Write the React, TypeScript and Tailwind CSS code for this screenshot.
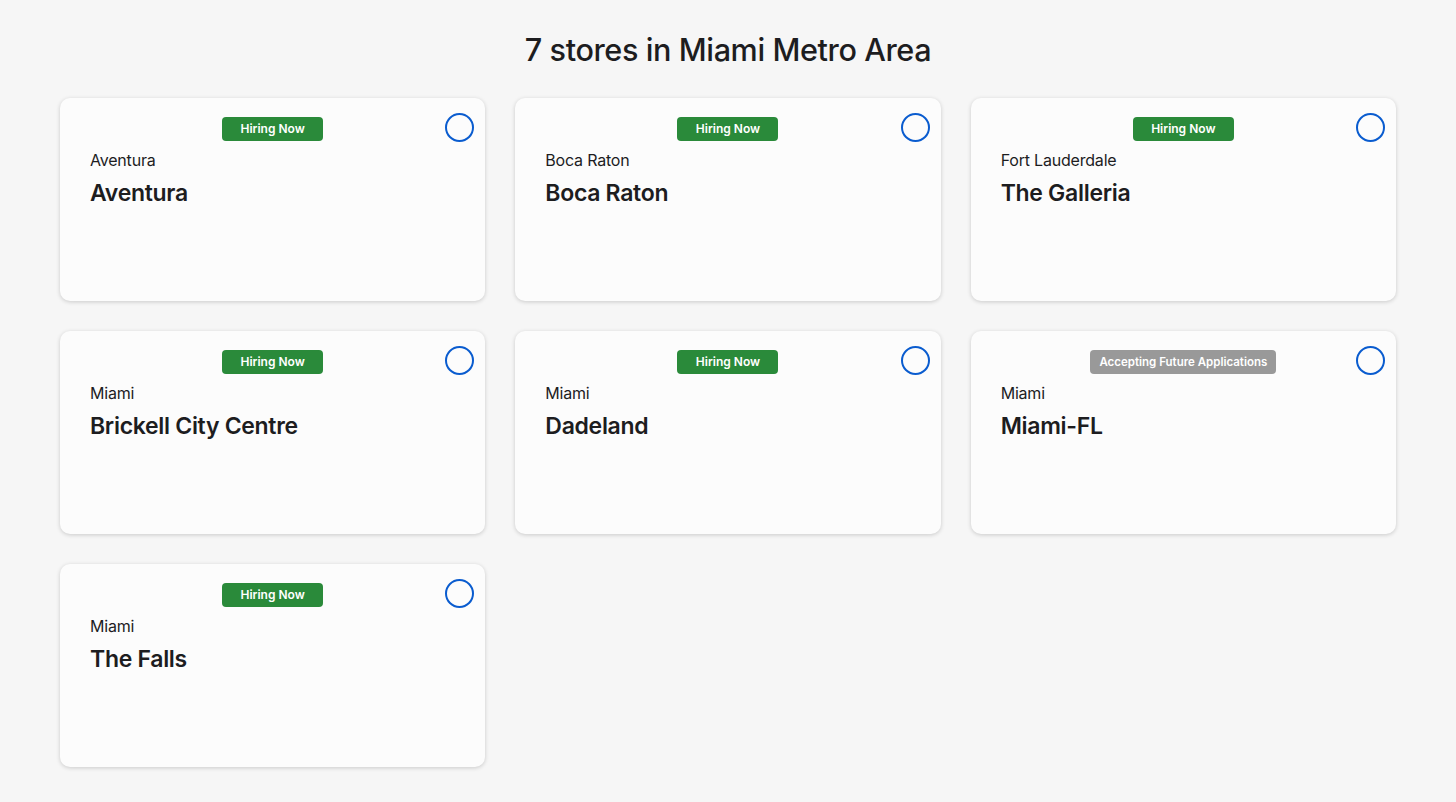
import * as React from 'react';

interface Store {
    city: string;
    name: string;
    hiring: boolean;
}

const stores: Store[] = [
    { city: 'Aventura', name: 'Aventura', hiring: true },
    { city: 'Boca Raton', name: 'Boca Raton', hiring: true },
    { city: 'Fort Lauderdale', name: 'The Galleria', hiring: true },
    { city: 'Miami', name: 'Brickell City Centre', hiring: true },
    { city: 'Miami', name: 'Dadeland', hiring: true },
    { city: 'Miami', name: 'Miami-FL', hiring: false },
    { city: 'Miami', name: 'The Falls', hiring: true },
];

function StoreCard({ store }: { store: Store }) {
    return (
        <div className="relative h-[203px] rounded-[10px] bg-[#fcfcfc] shadow-[0_1px_4px_rgba(0,0,0,0.18)] px-[30px] pt-[19px]">
            {/* Status badge */}
            <div className="flex justify-center">
                {store.hiring ? (
                    <span className="min-w-[101px] h-[24px] px-[10px] rounded-[4px] bg-[#2a8a3a] text-white text-[12px] font-semibold leading-[24px] text-center">
                        Hiring Now
                    </span>
                ) : (
                    <span className="h-[24px] px-[9px] rounded-[4px] bg-[#999999] text-white text-[11.5px] font-semibold leading-[24px] text-center">
                        Accepting Future Applications
                    </span>
                )}
            </div>

            {/* Select circle */}
            <div className="absolute top-[15px] right-[11px] w-[29px] h-[29px] rounded-full border-2 border-[#0a5ccf]" />

            <div className="mt-[8px] text-[16px] leading-[22px] text-[#1d1d1f] tracking-[-0.2px]">
                {store.city}
            </div>
            <div className="mt-[8px] text-[23px] leading-[28px] font-semibold text-[#1d1d1f] tracking-[-0.3px]">
                {store.name}
            </div>
        </div>
    );
}

export default function App() {
    return (
        <div
            className="min-h-screen bg-[#f6f6f6] px-[60px] pb-[34px]"
            style={{ fontFamily: 'Inter, "Noto Sans", sans-serif' }}
        >
            <h1 className="pt-[30px] pb-[28px] text-center text-[30.6px] leading-[40px] font-medium text-[#1d1d1f] tracking-[-0.4px]">
                7 stores in Miami Metro Area
            </h1>
            <div className="grid grid-cols-3 gap-x-[30px] gap-y-[30px]">
                {stores.map((store) => (
                    <StoreCard key={store.name} store={store} />
                ))}
            </div>
        </div>
    );
}
